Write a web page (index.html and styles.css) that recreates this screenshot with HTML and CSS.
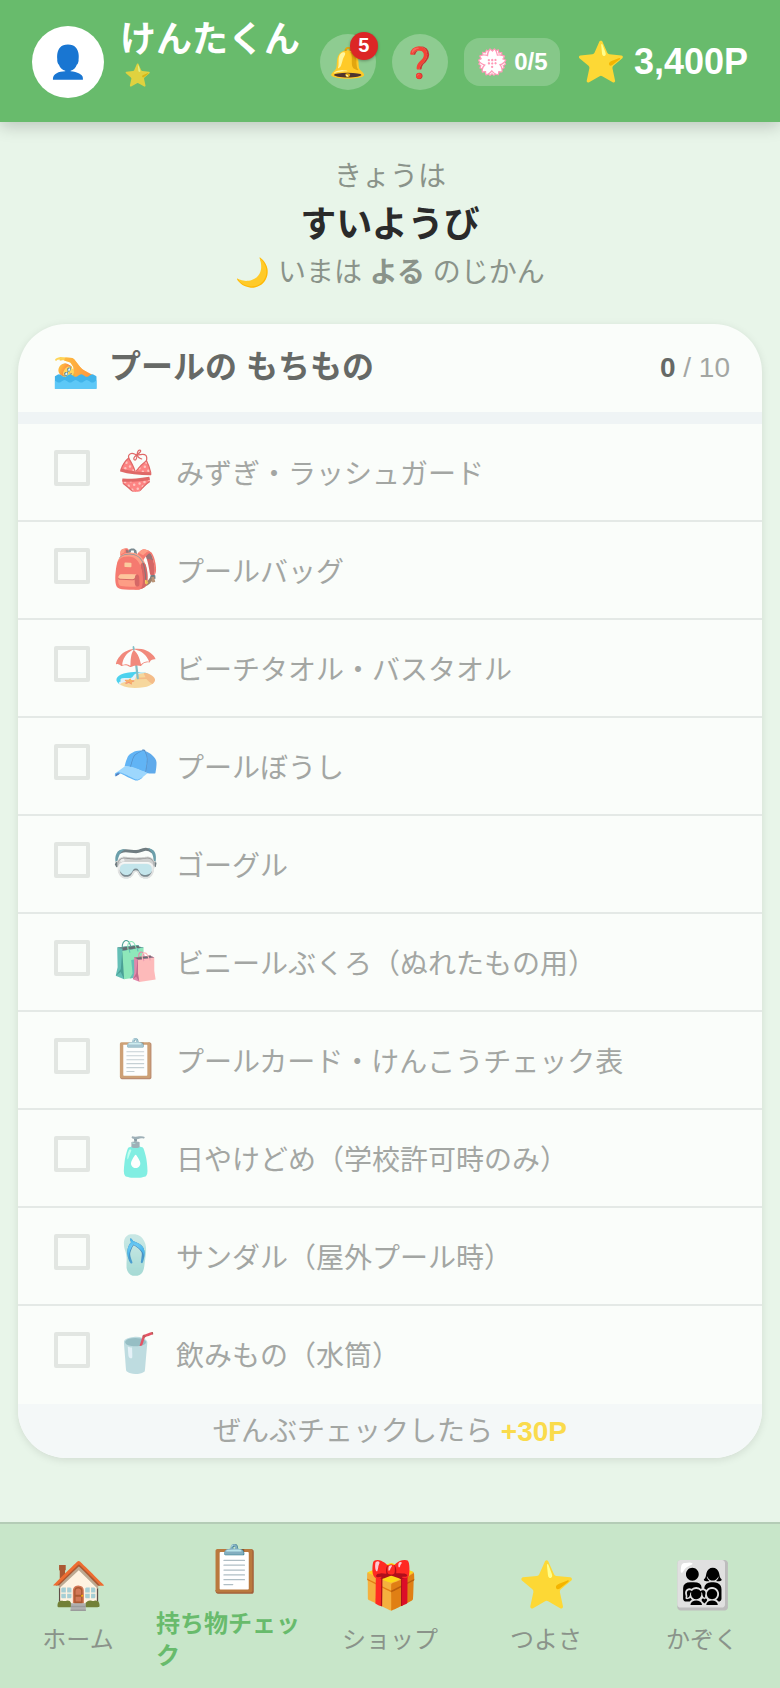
FILE: index.html
```html
<!DOCTYPE html>
<html lang="ja">
<head>
<meta charset="utf-8">
<meta name="viewport" content="width=device-width, initial-scale=1">
<title>持ち物チェック</title>
<link rel="stylesheet" href="styles.css">
</head>
<body>
<header class="topbar">
  <div class="avatar">👤</div>
  <div class="profile">
    <div class="profile-name">けんたくん</div>
    <div class="profile-rank">⭐</div>
  </div>
  <div class="tools">
    <button class="round" type="button" aria-label="おしらせ">🔔<span class="badge">5</span></button>
    <button class="round" type="button" aria-label="ヘルプ">❓</button>
    <button class="stamp" type="button"><span class="stamp-icon">💮</span><span>0/5</span></button>
  </div>
  <div class="points"><span class="points-icon">⭐</span><span>3,400P</span></div>
</header>
<main class="content">
  <section class="day">
    <p class="day-line">きょうは</p>
    <h1 class="day-name">すいようび</h1>
    <p class="day-line">🌙 いまは <strong>よる</strong> のじかん</p>
  </section>
  <section class="card">
    <div class="card-head">
      <span class="card-icon">🏊</span>
      <h2 class="card-title">プールの もちもの</h2>
      <div class="count"><strong>0</strong> / 10</div>
    </div>
    <div class="progress"></div>
    <ul class="items">
      <li><label class="item"><input class="tick" type="checkbox"><span class="item-icon">👙</span><span class="item-text">みずぎ・ラッシュガード</span></label></li>
      <li><label class="item"><input class="tick" type="checkbox"><span class="item-icon">🎒</span><span class="item-text">プールバッグ</span></label></li>
      <li><label class="item"><input class="tick" type="checkbox"><span class="item-icon">🏖️</span><span class="item-text">ビーチタオル・バスタオル</span></label></li>
      <li><label class="item"><input class="tick" type="checkbox"><span class="item-icon">🧢</span><span class="item-text">プールぼうし</span></label></li>
      <li><label class="item"><input class="tick" type="checkbox"><span class="item-icon">🥽</span><span class="item-text">ゴーグル</span></label></li>
      <li><label class="item"><input class="tick" type="checkbox"><span class="item-icon">🛍️</span><span class="item-text">ビニールぶくろ（ぬれたもの用）</span></label></li>
      <li><label class="item"><input class="tick" type="checkbox"><span class="item-icon">📋</span><span class="item-text">プールカード・けんこうチェック表</span></label></li>
      <li><label class="item"><input class="tick" type="checkbox"><span class="item-icon">🧴</span><span class="item-text">日やけどめ（学校許可時のみ）</span></label></li>
      <li><label class="item"><input class="tick" type="checkbox"><span class="item-icon">🩴</span><span class="item-text">サンダル（屋外プール時）</span></label></li>
      <li><label class="item"><input class="tick" type="checkbox"><span class="item-icon">🥤</span><span class="item-text">飲みもの（水筒）</span></label></li>
    </ul>
    <div class="card-foot">ぜんぶチェックしたら <strong>+30P</strong></div>
  </section>
</main>
<nav class="tabs">
  <a class="tab" href="#home"><span class="tab-icon">🏠</span><span class="tab-label">ホーム</span></a>
  <a class="tab current" href="#check"><span class="tab-icon">📋</span><span class="tab-label">持ち物チェック</span></a>
  <a class="tab" href="#shop"><span class="tab-icon">🎁</span><span class="tab-label">ショップ</span></a>
  <a class="tab" href="#power"><span class="tab-icon">⭐</span><span class="tab-label">つよさ</span></a>
  <a class="tab" href="#family"><span class="tab-icon">👨‍👩‍👧‍👦</span><span class="tab-label">かぞく</span></a>
</nav>
</body>
</html>
```

FILE: styles.css
```css
* {
  box-sizing: border-box;
}

body {
  margin: 0;
  min-height: 100vh;
  display: flex;
  flex-direction: column;
  background: #e8f5e9;
  color: #2a2a2a;
  font-family: "Liberation Sans", "Noto Sans CJK JP", sans-serif;
  font-size: 28px;
}

h1,
h2,
p,
ul {
  margin: 0;
  padding: 0;
}

button {
  border: 0;
  padding: 0;
  color: inherit;
  font-family: inherit;
  cursor: pointer;
}

.topbar {
  display: flex;
  align-items: center;
  padding: 18px 32px 16px;
  background: #68bb6c;
  color: #fff;
  box-shadow: 0 4px 16px rgba(0, 0, 0, 0.2);
}

.avatar {
  display: grid;
  place-items: center;
  width: 72px;
  height: 72px;
  margin-right: 16px;
  border-radius: 50%;
  background: #fff;
  font-size: 32px;
}

.profile {
  flex: 1;
  height: 88px;
}

.profile-name {
  font-size: 36px;
  font-weight: 700;
  line-height: 44px;
  white-space: nowrap;
}

.profile-rank {
  padding-left: 4px;
  font-size: 22px;
  line-height: 28px;
  opacity: 0.8;
}

.tools {
  display: flex;
  align-items: center;
  gap: 16px;
}

.round {
  position: relative;
  display: grid;
  place-items: center;
  width: 56px;
  height: 56px;
  border-radius: 50%;
  background: rgba(255, 255, 255, 0.25);
  font-size: 30px;
}

.badge {
  position: absolute;
  top: -2px;
  right: -2px;
  width: 28px;
  height: 28px;
  border-radius: 50%;
  background: #dc2626;
  color: #fff;
  font-size: 20px;
  font-weight: 700;
  line-height: 26px;
  text-align: center;
  box-shadow: 0 1px 3px rgba(0, 0, 0, 0.3);
}

.stamp {
  display: flex;
  align-items: center;
  justify-content: center;
  gap: 6px;
  width: 96px;
  height: 48px;
  border-radius: 16px;
  background: rgba(255, 255, 255, 0.2);
  font-size: 24px;
  font-weight: 700;
}

.stamp-icon {
  font-size: 26px;
}

.points {
  display: flex;
  align-items: center;
  gap: 8px;
  margin-left: 16px;
  font-size: 36px;
  font-weight: 700;
}

.points-icon {
  font-size: 40px;
}

.content {
  flex: 1;
  padding: 34px 18px 64px;
}

.day {
  margin-bottom: 30px;
  color: #8a938a;
  text-align: center;
}

.day-line {
  line-height: 42px;
}

.day-name {
  color: #2a2a2a;
  font-size: 36px;
  line-height: 54px;
}

.card {
  overflow: hidden;
  border-radius: 48px;
  background: #fafdfa;
  color: #a3a6a3;
  box-shadow: 0 2px 8px rgba(0, 0, 0, 0.1);
}

.card-head {
  display: flex;
  align-items: center;
  height: 88px;
  padding: 0 32px 0 34px;
}

.card-icon {
  margin-right: 10px;
  font-size: 38px;
  opacity: 0.75;
}

.card-title {
  flex: 1;
  padding-bottom: 8px;
  color: #666966;
  font-size: 32px;
}

.count strong {
  color: #666966;
}

.progress {
  height: 12px;
  background: #eff4f5;
}

.items {
  list-style: none;
}

.item {
  display: flex;
  align-items: center;
  height: 98px;
  padding: 0 36px;
  border-bottom: 2px solid #e4e9e6;
}

.items li:last-child .item {
  border-bottom-color: transparent;
}

.tick {
  appearance: none;
  width: 36px;
  height: 36px;
  margin: 0 20px 8px 0;
  border: 4px solid #e2e6e2;
  border-radius: 2px;
}

.tick:checked {
  background: #68bb6c;
}

.item-icon {
  width: 50px;
  margin-right: 16px;
  padding-bottom: 2px;
  font-size: 38px;
  text-align: center;
  opacity: 0.7;
}

.card-foot {
  height: 54px;
  padding-top: 2px;
  background: #f4f8f8;
  line-height: 52px;
  text-align: center;
}

.card-foot strong {
  color: #fadb4c;
}

.tabs {
  display: grid;
  grid-template-columns: repeat(5, 1fr);
  min-height: 166px;
  border-top: 2px solid #b4ccb6;
  background: #c8e6c9;
}

.tab {
  display: flex;
  flex-direction: column;
  align-items: center;
  justify-content: center;
  gap: 12px;
  padding-top: 2px;
  color: #8a938a;
  font-size: 24px;
  line-height: 32px;
  text-decoration: none;
}

.tab-icon {
  font-size: 46px;
  line-height: 54px;
}

.current {
  color: #68bb6c;
  font-weight: 700;
}
```
